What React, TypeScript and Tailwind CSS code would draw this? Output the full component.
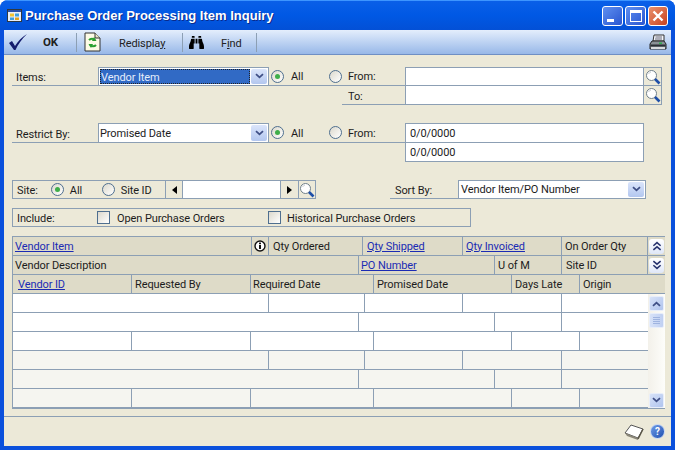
import React from "react";
import { FaBinoculars } from "react-icons/fa";

const LINE = "border-[#8c9fb4]";

function Radio({ on }: { on?: boolean }) {
  return (
    <span className="flex h-[13px] w-[13px] shrink-0 items-center justify-center rounded-full border border-[#4f6f8f] bg-gradient-to-br from-[#dcd9cd] to-white">
      {on && <span className="h-[5px] w-[5px] rounded-full bg-[#3fae4a]" />}
    </span>
  );
}

function Chevron({ up, color = "#3f4f86", h = 7 }: { up?: boolean; color?: string; h?: number }) {
  return (
    <svg width="9" height={h} viewBox={`0 0 9 ${h}`} className={up ? "rotate-180" : ""}>
      <path d="M1 1.2 L4.5 4.4 L8 1.2" fill="none" stroke={color} strokeWidth="1.8" />
    </svg>
  );
}

function DoubleChevron({ up }: { up?: boolean }) {
  return (
    <svg width="10" height="10" viewBox="0 0 11 11" className={up ? "rotate-180" : ""}>
      <path d="M1.5 1.2 L5.5 4.6 L9.5 1.2 M1.5 5.8 L5.5 9.2 L9.5 5.8" fill="none" stroke="#27336e" strokeWidth="1.7" />
    </svg>
  );
}

function ComboArrow() {
  return (
    <span className="my-px mr-px flex w-[16px] items-center justify-center rounded-[2px] bg-gradient-to-b from-[#dbe5fb] to-[#b3c7ef]">
      <Chevron />
    </span>
  );
}

function Lookup() {
  return (
    <svg width="16" height="16" viewBox="0 0 16 16">
      <circle cx="6.5" cy="6.5" r="5" fill="#fff" stroke="#70808a" strokeWidth="1" />
      <path d="M3.5 5 A4 4 0 0 1 6 3" stroke="#c9ced2" fill="none" />
      <path d="M10 10 L14.5 14.5" stroke="#1e4fa8" strokeWidth="2.6" />
    </svg>
  );
}

function LookupCell() {
  return (
    <div className={`flex h-full w-[18px] items-center justify-center border-y border-r ${LINE}`}>
      <Lookup />
    </div>
  );
}

function RadioCell() {
  return (
    <div className={`flex h-full w-[60px] items-center border-b pl-[2px] ${LINE}`}>
      <Radio on />
      <span className="ml-[7px] pt-px">All</span>
    </div>
  );
}

function FromCell() {
  return (
    <div className={`flex w-[76px] items-center border-b ${LINE}`}>
      <Radio />
      <span className="ml-[6px] pt-px">From:</span>
    </div>
  );
}

function Hd({ w, link, last, children, cls }: { w: number; link?: boolean; last?: boolean; children?: React.ReactNode; cls?: string }) {
  return (
    <div
      style={{ width: w }}
      className={`flex h-full shrink-0 items-center truncate border-b ${LINE} pl-[2px] ${last ? "" : "border-r"} ${link ? "text-[#1b2bb4] underline" : ""} ${cls ?? ""}`}
    >
      {children}
    </div>
  );
}

function Cells({ widths, soft }: { widths: number[]; soft?: boolean }) {
  return (
    <div className={`flex h-[19px] shrink-0 ${soft ? "bg-[#f5f5f0]" : "bg-white"}`}>
      {widths.map((w, i) => (
        <div key={i} style={{ width: w }} className={`h-full shrink-0 border-b ${LINE} ${i < widths.length - 1 ? "border-r" : ""}`} />
      ))}
    </div>
  );
}

const R1 = [256, 96, 98, 99, 86];
const R2 = [346, 136, 67, 86];
const R3 = [119, 119, 123, 138, 68, 68];

export default function App() {
  return (
    <div
      className="flex h-[450px] w-[675px] flex-col overflow-hidden rounded-t-[8px] bg-[#0a50dc] text-[11px] leading-none tracking-[-0.1px] text-[#1c1c1c]"
      style={{ fontFamily: 'Roboto, "Liberation Sans", Arial, sans-serif' }}
    >
      {/* Title bar */}
      <div className="flex h-[30px] shrink-0 items-center border-t border-[#3d95ff] bg-gradient-to-b from-[#0a5fe8] via-[#0058e4] to-[#0350d6] pl-[7px] pr-[7px]">
        <svg width="15" height="13" viewBox="0 0 15 13" className="shrink-0">
          <rect x="0.5" y="0.5" width="14" height="12" fill="#e8eef8" stroke="#30383f" />
          <rect x="1" y="1" width="13" height="2" fill="#2a4fa8" />
          <rect x="3" y="4.5" width="4" height="3" fill="#f2c230" />
          <rect x="8" y="4.5" width="4" height="3" fill="#3f9fdc" />
          <rect x="3" y="8.5" width="4" height="2.5" fill="#3f9fdc" />
          <rect x="8" y="8.5" width="4" height="2.5" fill="#e0a020" />
        </svg>
        <span
          className="ml-[3px] text-[13px] font-bold tracking-normal text-white [text-shadow:1px_1px_0_#0a2a8a]"
          style={{ fontFamily: '"Liberation Sans", Arial, sans-serif' }}
        >
          Purchase Order Processing Item Inquiry
        </span>
        <div className="ml-auto flex gap-[2px]">
          <div className="flex h-[20px] w-[21px] items-end rounded-[3px] border border-white bg-gradient-to-br from-[#5f8ff0] to-[#2a55d0] pb-[3px] pl-[4px]">
            <span className="h-[3px] w-[7px] bg-white" />
          </div>
          <div className="flex h-[20px] w-[21px] items-center justify-center rounded-[3px] border border-white bg-gradient-to-br from-[#5f8ff0] to-[#2a55d0]">
            <span className="h-[12px] w-[12px] border border-t-[3px] border-white" />
          </div>
          <div className="flex h-[20px] w-[20px] items-center justify-center rounded-[3px] border border-white bg-gradient-to-br from-[#e9906c] to-[#c8401c]">
            <svg width="12" height="12" viewBox="0 0 12 12">
              <path d="M1.5 1.5 L10.5 10.5 M10.5 1.5 L1.5 10.5" stroke="#fff" strokeWidth="2.4" />
            </svg>
          </div>
        </div>
      </div>

      {/* Window body */}
      <div className="mx-[4px] flex min-h-0 flex-1 flex-col bg-[#ece9d8]">
        {/* Toolbar */}
        <div className="flex h-[25px] shrink-0 items-center border-b border-[#6f8fc4] bg-gradient-to-b from-[#e4eefc] to-[#98b8e8] text-[#222]">
          <svg width="20" height="18" viewBox="0 0 20 18" className="ml-[4px] shrink-0">
            <path d="M1 10 L4 8 L7 13 C10 8 14 4 19 1 C14 6 10 11 7.5 17 L6 17 Z" fill="#141c6e" />
          </svg>
          <span className="ml-[15px] w-[18px] pt-[2px] text-[11.5px] font-bold">OK</span>
          <span className={`ml-[15px] h-[19px] border-l ${LINE}`} />
          <svg width="17" height="20" viewBox="0 0 17 20" className="ml-[7px] shrink-0">
            <path d="M1 1 H11 L16 6 V19 H1 Z" fill="#fdfbe6" stroke="#333" />
            <path d="M11 1 V6 H16" fill="#e9e6c8" stroke="#333" />
            <path d="M5 8 A4 4 0 0 1 11 8" fill="none" stroke="#2aa030" strokeWidth="2" />
            <path d="M10 5 L12.5 9 L8 9 Z" fill="#2aa030" />
            <path d="M12 13 A4 4 0 0 1 6 13" fill="none" stroke="#2aa030" strokeWidth="2" />
            <path d="M7 16 L4.5 12 L9 12 Z" fill="#2aa030" />
          </svg>
          <span className="ml-[18px] w-[47px] pt-[2px]">
            Redispla<span className="underline">y</span>
          </span>
          <span className={`ml-[16px] h-[19px] border-l ${LINE}`} />
          <FaBinoculars className="ml-[6px] shrink-0 text-[15px] text-black" />
          <span className="ml-[17px] w-[21px] pt-[2px]">
            F<span className="underline">i</span>nd
          </span>
          <span className={`ml-[14px] h-[19px] border-l ${LINE}`} />
          <svg width="18" height="17" viewBox="0 0 18 17" className="ml-auto mr-[4px] shrink-0">
            <path d="M5 1 H15 L15 7 H4 Z" fill="#f4f6fa" stroke="#333" />
            <path d="M6.5 3 H13 M6 5 H13" stroke="#667" />
            <path d="M3 7 H15 L17 10 V15 H1 V10 Z" fill="#8a9096" stroke="#222" />
            <rect x="1.5" y="10.5" width="15" height="2" fill="#2a2f34" />
            <rect x="10" y="8.5" width="3" height="1.5" fill="#30b050" />
            <rect x="2" y="13" width="14" height="2" fill="#d8dade" />
          </svg>
        </div>

        {/* Form */}
        <div className="flex flex-col pl-[8px]">
          {/* Items */}
          <div className="mt-[12px] flex h-[19px] items-stretch">
            <div className={`flex w-[86px] items-center border-b pl-[4px] pt-[3px] ${LINE}`}>Items:</div>
            <div className={`flex w-[171px] border ${LINE} bg-white`}>
              <div className="m-px flex flex-1 items-center border border-dotted border-[#222] bg-[#316ac5] pt-px text-[#e4edfb]">Vendor Item</div>
              <ComboArrow />
            </div>
            <RadioCell />
            <FromCell />
            <div className={`w-[239px] border ${LINE} bg-white`} />
            <LookupCell />
          </div>
          <div className="flex h-[19px] items-stretch">
            <div className="w-[330px]" />
            <div className={`flex w-[63px] items-center border-b pl-[6px] pt-[2px] ${LINE}`}>To:</div>
            <div className={`w-[239px] border border-t-0 ${LINE} bg-white`} />
            <div className={`flex w-[18px] items-center justify-center border-b border-r ${LINE}`}>
              <Lookup />
            </div>
          </div>

          {/* Restrict By */}
          <div className="mt-[18px] flex h-[20px] items-stretch">
            <div className={`flex w-[86px] items-center border-b pl-[4px] pt-[3px] ${LINE}`}>Restrict By:</div>
            <div className={`flex w-[171px] border ${LINE} bg-white`}>
              <div className="flex flex-1 items-center pl-[1px] pt-px">Promised Date</div>
              <ComboArrow />
            </div>
            <RadioCell />
            <FromCell />
            <div className={`flex w-[239px] items-center border ${LINE} bg-white pl-[4px] pt-px`}>0/0/0000</div>
          </div>
          <div className="flex h-[19px]">
            <div className="w-[393px]" />
            <div className={`flex w-[239px] items-center border border-t-0 ${LINE} bg-white pl-[4px] pt-px`}>0/0/0000</div>
          </div>

          {/* Site / Sort */}
          <div className="mt-[18px] flex h-[19px] items-stretch">
            <div className={`flex w-[304px] items-center border ${LINE}`}>
              <span className="ml-[4px] w-[34px] pt-[2px]">Site:</span>
              <Radio on />
              <span className="ml-[6px] w-[32px] pt-px">All</span>
              <Radio />
              <span className="ml-[6px] w-[44px] pt-px">Site ID</span>
              <div className={`flex h-full w-[18px] items-center justify-center border-l ${LINE} text-[#111]`}>
                <span className="border-y-[4px] border-r-[5px] border-y-transparent border-r-black" />
              </div>
              <div className={`h-full w-[99px] border-x ${LINE} bg-white`} />
              <div className="flex h-full w-[17px] items-center justify-center">
                <span className="border-y-[4px] border-l-[5px] border-y-transparent border-l-black" />
              </div>
              <div className={`flex h-full flex-1 items-center justify-center border-l ${LINE}`}>
                <Lookup />
              </div>
            </div>
            <div className={`ml-[74px] flex w-[68px] items-center border-b pl-[5px] pt-[3px] ${LINE}`}>Sort By:</div>
            <div className={`flex w-[188px] border ${LINE} bg-white`}>
              <div className="flex flex-1 items-center pl-[2px]">Vendor Item/PO Number</div>
              <ComboArrow />
            </div>
          </div>

          {/* Include */}
          <div className={`mt-[9px] flex h-[19px] w-[459px] items-center border ${LINE}`}>
            <span className="ml-[4px] w-[80px] pt-[2px]">Include:</span>
            <span className="h-[13px] w-[13px] border border-[#4f6f8f] bg-gradient-to-br from-[#dcd9cd] to-white" />
            <span className="ml-[7px] w-[151px] pt-px">Open Purchase Orders</span>
            <span className="h-[13px] w-[13px] border border-[#4f6f8f] bg-gradient-to-br from-[#dcd9cd] to-white" />
            <span className="ml-[6px] pt-px">Historical Purchase Orders</span>
          </div>

          {/* Table */}
          <div className={`mt-[9px] flex h-[173px] w-[653px] flex-col border-b border-l ${LINE}`}>
            <div className={`flex h-[20px] shrink-0 border-t ${LINE} bg-[#dedbc8]`}>
              <Hd w={239} link>Vendor Item</Hd>
              <Hd w={17} cls="pl-[2px]">
                <svg width="12" height="12" viewBox="0 0 12 12">
                  <circle cx="6" cy="6" r="5" fill="#fff" stroke="#111" strokeWidth="1.4" />
                  <rect x="5" y="5" width="2" height="4" fill="#111" />
                  <rect x="5" y="2.6" width="2" height="1.6" fill="#111" />
                </svg>
              </Hd>
              <Hd w={94} cls="pl-[4px]">Qty Ordered</Hd>
              <Hd w={100} link cls="pl-[4px]">Qty Shipped</Hd>
              <Hd w={99} link cls="pl-[3px]">Qty Invoiced</Hd>
              <Hd w={86} cls="pl-[3px]">On Order Qty</Hd>
              <Hd w={17} last cls="justify-center !pl-0">
                <span className="flex h-[15px] w-[15px] items-center justify-center rounded-[3px] bg-gradient-to-b from-white to-[#dfe7f8]">
                  <DoubleChevron up />
                </span>
              </Hd>
            </div>
            <div className="flex h-[19px] shrink-0 bg-[#dedbc8]">
              <Hd w={346}>Vendor Description</Hd>
              <Hd w={136} link>PO Number</Hd>
              <Hd w={67} cls="pl-[3px]">U of M</Hd>
              <Hd w={86} cls="pl-[4px]">Site ID</Hd>
              <Hd w={17} last cls="justify-center !pl-0">
                <span className="flex h-[15px] w-[15px] items-center justify-center rounded-[3px] bg-gradient-to-b from-white to-[#dfe7f8]">
                  <DoubleChevron />
                </span>
              </Hd>
            </div>
            <div className="flex h-[19px] shrink-0 bg-[#dedbc8]">
              <Hd w={119} link cls="pl-[5px]">Vendor ID</Hd>
              <Hd w={119} cls="pl-[3px]">Requested By</Hd>
              <Hd w={123} cls="pl-[2px]">Required Date</Hd>
              <Hd w={138} cls="pl-[3px]">Promised Date</Hd>
              <Hd w={68} cls="pl-[3px]">Days Late</Hd>
              <Hd w={85} last cls="pl-[3px]">Origin</Hd>
            </div>
            <div className="flex min-h-0 flex-1">
              <div className="flex w-[635px] shrink-0 flex-col">
                <Cells widths={R1} />
                <Cells widths={R2} />
                <Cells widths={R3} />
                <Cells widths={R1} soft />
                <Cells widths={R2} soft />
                <Cells widths={R3} soft />
              </div>
              <div className="flex w-[17px] flex-col bg-gradient-to-r from-[#f3f1ea] to-[#fdfdfa] pl-px pt-[2px]">
                <div className="flex h-[15px] w-[15px] items-center justify-center rounded-[2px] border border-[#e8eefa] bg-gradient-to-br from-[#d7e2f8] to-[#b0c4ee]">
                  <Chevron up />
                </div>
                <div className="mt-[2px] flex h-[15px] w-[15px] flex-col items-center justify-center gap-px rounded-[2px] border border-[#e8eefa] bg-gradient-to-r from-[#d7e2f8] to-[#c0d0f2]">
                  <span className="h-px w-[7px] bg-[#9fb4e0]" />
                  <span className="h-px w-[7px] bg-[#9fb4e0]" />
                  <span className="h-px w-[7px] bg-[#9fb4e0]" />
                  <span className="h-px w-[7px] bg-[#9fb4e0]" />
                </div>
                <div className="mt-auto flex h-[15px] w-[15px] items-center justify-center rounded-[2px] border border-[#e8eefa] bg-gradient-to-br from-[#d7e2f8] to-[#b0c4ee]">
                  <Chevron />
                </div>
              </div>
            </div>
          </div>
        </div>

        {/* Footer */}
        <div className={`mt-[7px] flex flex-1 items-center justify-end border-t ${LINE} pr-[6px]`}>
          <svg width="20" height="16" viewBox="0 0 20 16" className="mr-[6px] shrink-0">
            <path d="M1 9 L7 1 L19 5 L14 14 Z" fill="#fff" stroke="#555" />
            <path d="M1 9 L14 14 L14 16 L3 12 Z" fill="#8a8678" />
            <path d="M19 5 L14 15" stroke="#5a5648" strokeWidth="1.6" />
          </svg>
          <span className="flex h-[15px] w-[15px] items-center justify-center rounded-full border border-[#c8d8f4] bg-gradient-to-br from-[#6f9ce8] to-[#1f4fb0] text-[10px] font-bold text-white">?</span>
        </div>
      </div>
      <div className="h-[4px] shrink-0" />
    </div>
  );
}
